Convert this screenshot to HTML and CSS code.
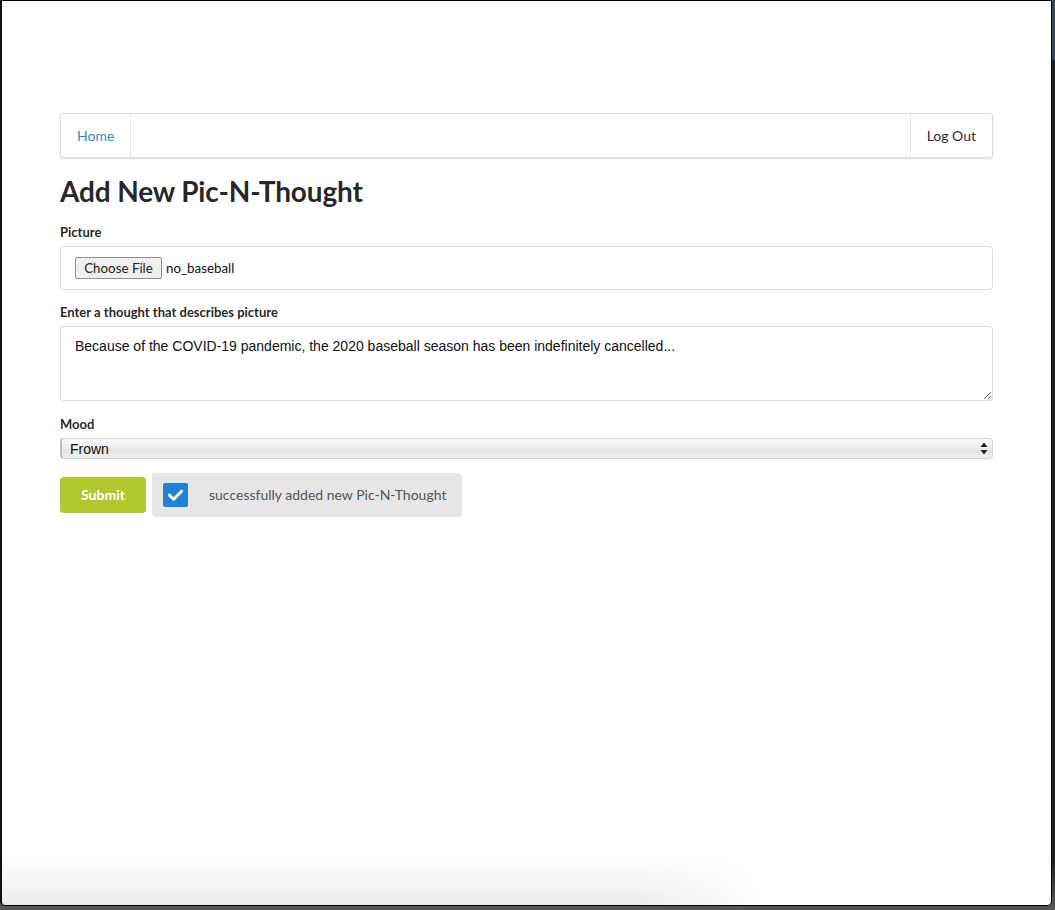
FILE: index.html
```html
<!DOCTYPE html>
<html lang="en">
<head>
<meta charset="utf-8">
<title>Add New Pic-N-Thought</title>
<link rel="stylesheet" href="styles.css">
</head>
<body>
<div class="window">
  <div class="container">
    <nav class="menu">
      <a class="item home" href="#">Home</a>
      <a class="item logout" href="#">Log Out</a>
    </nav>
    <h1 class="title">Add New Pic-N-Thought</h1>
    <form class="form">
      <div class="field">
        <label class="label">Picture</label>
        <div class="file-input">
          <span class="file-btn">Choose File</span>
          <span class="file-name">no_baseball</span>
        </div>
      </div>
      <div class="field field-thought">
        <label class="label">Enter a thought that describes picture</label>
        <textarea class="thought">Because of the COVID-19 pandemic, the 2020 baseball season has been indefinitely cancelled...</textarea>
      </div>
      <div class="field field-mood">
        <label class="label">Mood</label>
        <div class="select-wrap">
          <select class="mood"><option>Frown</option></select>
          <svg class="select-arrows" width="8" height="13" viewBox="0 0 8 13"><path d="M4 0.5 L7.5 5 H0.5 Z M4 12.5 L7.5 8 H0.5 Z" fill="#222"/></svg>
        </div>
      </div>
      <div class="actions">
        <button type="button" class="submit">Submit</button>
        <div class="message">
          <span class="check">
            <svg width="25" height="24" viewBox="0 0 25 24"><path d="M6.5 12.2 L10.6 16.3 L18.6 8.2" fill="none" stroke="#fff" stroke-width="3" stroke-linecap="round" stroke-linejoin="round"/></svg>
          </span>
          <span class="message-text">successfully added new Pic-N-Thought</span>
        </div>
      </div>
    </form>
  </div>
  <div class="bottom-shade"></div>
</div>
</body>
</html>
```

FILE: styles.css
```css
html, body {
  margin: 0;
  padding: 0;
}
body {
  width: 1055px;
  height: 910px;
  background: linear-gradient(to bottom, #2f4a52 0, #2f4a52 60px, #1f1f1f 60px, #1f1f1f 860px, #555 905px);
  overflow: hidden;
  font-family: Lato, "Helvetica Neue", Arial, sans-serif;
  font-size: 14px;
  color: rgba(0, 0, 0, 0.87);
}
.window {
  position: relative;
  width: 1049px;
  height: 904px;
  background: #fff;
  border: 1px solid #000;
  border-left: 2px solid #111;
  border-radius: 0 0 5px 5px;
  overflow: hidden;
}
.container {
  width: 933px;
  margin-left: 58px;
  padding-top: 112px;
}
.menu {
  display: flex;
  justify-content: space-between;
  height: 43px;
  border: 1px solid rgba(34, 36, 38, 0.15);
  border-radius: 4px;
  box-shadow: 0 1px 2px 0 rgba(34, 36, 38, 0.15);
  background: #fff;
}
.item {
  display: flex;
  align-items: center;
  padding: 0 16px;
  font-size: 14px;
  text-decoration: none;
}
.home {
  color: #4183c4;
  border-right: 1px solid rgba(34, 36, 38, 0.1);
}
.logout {
  color: rgba(0, 0, 0, 0.87);
  border-left: 1px solid rgba(34, 36, 38, 0.1);
}
.title {
  margin: 15px 0 13px;
  font-size: 28px;
  line-height: 36px;
  font-weight: 700;
  letter-spacing: -0.15px;
  color: rgba(0, 0, 0, 0.87);
}
.form {
  margin: 0;
}
.field {
  margin-bottom: 12px;
}
.field-thought {
  margin-bottom: 13px;
}
.field-mood {
  margin-bottom: 14px;
}
.label {
  display: block;
  font-size: 13px;
  font-weight: 700;
  line-height: 20px;
  margin-bottom: 4px;
}
.file-input {
  display: flex;
  align-items: center;
  box-sizing: border-box;
  height: 44px;
  padding: 0 14px;
  border: 1px solid rgba(34, 36, 38, 0.15);
  border-radius: 4px;
}
.file-btn {
  box-sizing: border-box;
  height: 22px;
  width: 87px;
  display: flex;
  align-items: center;
  justify-content: center;
  background: #efefef;
  border: 1px solid #8f8f8f;
  border-radius: 2px;
  font-size: 13.33px;
  color: #222;
}
.file-name {
  margin-left: 4px;
  font-size: 13.33px;
  color: #111;
}
.thought {
  display: block;
  box-sizing: border-box;
  width: 100%;
  height: 75px;
  margin: 0;
  padding: 11px 14px;
  border: 1px solid rgba(34, 36, 38, 0.15);
  border-radius: 4px;
  font-family: "Liberation Sans", Arial, sans-serif;
  font-size: 14px;
  line-height: 17px;
  color: #111;
  resize: vertical;
  outline: none;
}
.select-wrap {
  position: relative;
}
.mood {
  display: block;
  box-sizing: border-box;
  width: 100%;
  height: 21px;
  margin: 0;
  padding: 0 0 0 8px;
  -webkit-appearance: none;
  appearance: none;
  border: 1px solid #d2d2d2;
  border-left: 2px solid #bdbdbd;
  border-radius: 4px;
  background: linear-gradient(to bottom, #fbfbfb 0%, #efefef 40%, #e4e4e4 60%, #f1f1f1 100%);
  font-family: "Liberation Sans", Arial, sans-serif;
  font-size: 14px;
  color: #111;
  outline: none;
}
.select-arrows {
  position: absolute;
  right: 5px;
  top: 4px;
  pointer-events: none;
}
.actions {
  display: flex;
  align-items: center;
  gap: 6px;
}
.submit {
  box-sizing: border-box;
  width: 86px;
  height: 36px;
  padding: 0 0 2px;
  border: none;
  border-radius: 4px;
  background: #b3c62b;
  color: #fff;
  font-family: Lato, "Helvetica Neue", Arial, sans-serif;
  font-size: 14px;
  font-weight: 700;
  cursor: pointer;
}
.message {
  display: flex;
  align-items: center;
  box-sizing: border-box;
  width: 310px;
  height: 44px;
  padding: 0 0 0 11px;
  background: #e6e6e6;
  border-radius: 4px;
}
.check {
  display: flex;
  width: 25px;
  height: 24px;
  background: #2281d1;
  border-radius: 2px;
}
.message-text {
  margin-left: 21px;
  font-size: 14px;
  color: #555;
  padding-bottom: 1px;
}
.bottom-shade {
  position: absolute;
  left: 0;
  bottom: 0;
  width: 760px;
  height: 50px;
  background: linear-gradient(to bottom, rgba(0, 0, 0, 0), rgba(0, 0, 0, 0.07));
  -webkit-mask-image: linear-gradient(to right, #000 0, #000 640px, transparent 760px);
  mask-image: linear-gradient(to right, #000 0, #000 640px, transparent 760px);
  pointer-events: none;
}
```
